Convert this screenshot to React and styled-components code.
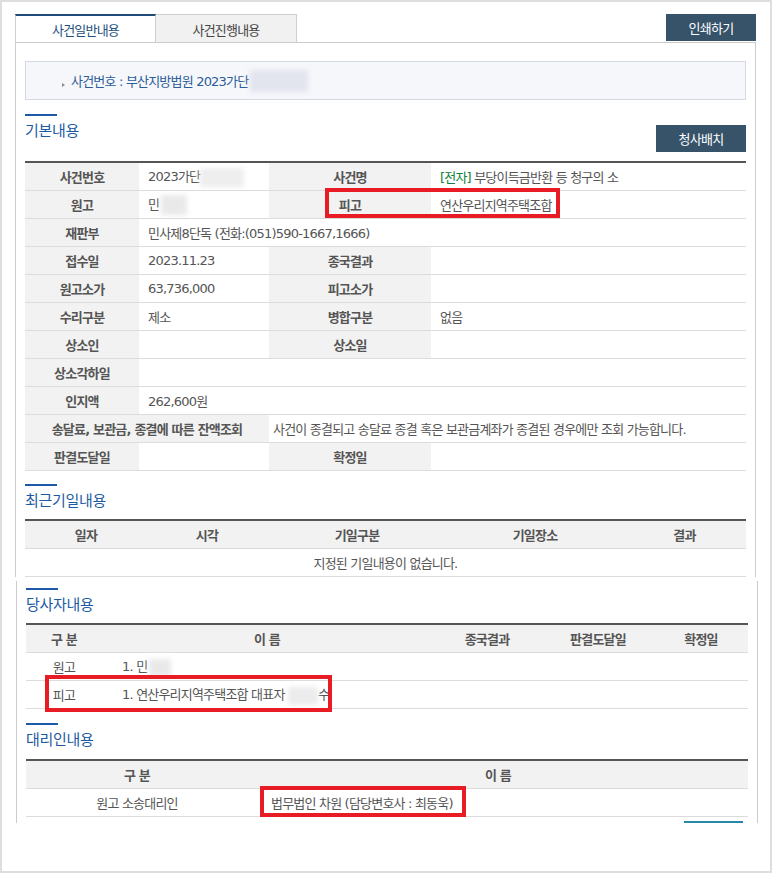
import React from 'react';
import styled, { createGlobalStyle } from 'styled-components';

const GlobalStyle = createGlobalStyle`
  html, body { margin: 0; padding: 0; background: #fff; }
  * { box-sizing: border-box; }
  body {
    font-family: "DejaVu Sans", "Noto Sans CJK KR", sans-serif;
    font-size: 13px;
    letter-spacing: -0.8px;
    color: #555;
  }
`;

const Frame = styled.div`
  width: 772px;
  height: 873px;
  border: 2px solid #dedede;
  padding: 12px 14px 0 13px;
  background: #fff;
`;

const TopBar = styled.div`
  display: flex;
  justify-content: space-between;
  align-items: flex-start;
  height: 28px;
`;

const Tabs = styled.div`
  display: flex;
`;

const Tab = styled.div`
  width: 141px;
  height: 28px;
  display: flex;
  align-items: center;
  justify-content: center;
  border-top: ${p => (p.$active ? '2px solid #1e4b78' : '1px solid #cfcfcf')};
  border-left: ${p => (p.$active ? '1px solid #cfcfcf' : 'none')};
  border-right: 1px solid #cfcfcf;
  background: ${p => (p.$active ? '#fff' : '#f1f1f1')};
  color: ${p => (p.$active ? '#24507e' : '#444')};
  font-size: 13px;
  padding-top: ${p => (p.$active ? '0' : '1px')};
`;

const DarkButton = styled.button`
  width: 90px;
  height: 27px;
  margin-top: ${p => p.$mt || 0}px;
  padding: 0;
  border: none;
  background: #36536a;
  color: #fff;
  font: inherit;
  font-size: 13px;
  letter-spacing: -0.7px;
  display: flex;
  align-items: center;
  justify-content: center;
  flex-shrink: 0;
`;

const Panel = styled.div`
  width: ${p => p.$w}px;
  margin-left: ${p => p.$ml || 0}px;
  margin-top: ${p => p.$mt || 0}px;
  border-left: 1px solid #cccccc;
  border-right: 1px solid #cccccc;
  border-top: ${p => (p.$top ? '1px solid #cccccc' : 'none')};
  padding: ${p => p.$pt || 0}px 9px 0 9px;
`;

const CaseBox = styled.div`
  margin-top: 18px;
  height: 39px;
  border: 1px solid #d5d9e3;
  background: #f6f7fb;
  display: flex;
  align-items: center;
  padding-left: 36px;
  color: #2b5d98;
  font-size: 13px;
`;

const Bullet = styled.span`
  width: 0;
  height: 0;
  border-left: 3px solid #8a8a8a;
  border-top: 2.5px solid transparent;
  border-bottom: 2.5px solid transparent;
  margin: 8px 6px 0 0;
`;

const Blur = styled.span`
  display: inline-block;
  width: ${p => p.$w}px;
  height: ${p => p.$h}px;
  background: ${p => p.$bg || '#ececec'};
  filter: blur(2.5px);
  vertical-align: middle;
  margin-left: ${p => p.$ml || 0}px;
`;

const SectionHead = styled.div`
  display: flex;
  justify-content: space-between;
  align-items: flex-start;
  margin-top: ${p => p.$mt}px;
`;

const TitleBlock = styled.div`
  display: flex;
  flex-direction: column;
`;

const Bar = styled.div`
  width: 32px;
  height: 2px;
  background: #1c5aa8;
`;

const Title = styled.h3`
  margin: 5px 0 0;
  font-size: 15px;
  line-height: 20px;
  font-weight: normal;
  color: #1c5aa3;
  letter-spacing: -0.3px;
`;

const TableWrap = styled.div`
  position: relative;
  margin-top: ${p => p.$mt}px;
`;

const Table = styled.table`
  width: 100%;
  border-collapse: separate;
  border-spacing: 0;
  table-layout: fixed;
  border-top: 2px solid #555;
`;

const Th = styled.th`
  height: 28px;
  padding: 0;
  background: #f2f2f2;
  border-bottom: 1px solid #dcdcdc;
  font-weight: bold;
  color: #555;
  text-align: center;
  font-size: 13px;
  white-space: nowrap;
`;

const Td = styled.td`
  height: 28px;
  padding: 0 0 0 ${p => (p.$pl ?? 9)}px;
  border-bottom: 1px solid #dcdcdc;
  text-align: ${p => p.$align || 'left'};
  color: #555;
  background: #fff;
  white-space: nowrap;
  font-size: 13px;
`;

const Tag = styled.span`
  color: #0f8240;
`;

const Highlight = styled.div`
  position: absolute;
  left: ${p => p.$x}px;
  top: ${p => p.$y}px;
  width: ${p => p.$w}px;
  height: ${p => p.$h}px;
  border: 4px solid #e81c24;
  pointer-events: none;
`;

const Footer = styled.div`
  display: flex;
  justify-content: flex-end;
  padding: 4px 5px 0 0;
`;

const TealBar = styled.div`
  width: 59px;
  height: 2px;
  background: #2a89ab;
`;

const Cols = ({ widths }) => (
  <colgroup>
    {widths.map((w, i) => (
      <col key={i} style={{ width: w }} />
    ))}
  </colgroup>
);

export default function App() {
  return (
    <>
      <GlobalStyle />
      <Frame>
        <TopBar>
          <Tabs>
            <Tab $active>사건일반내용</Tab>
            <Tab>사건진행내용</Tab>
          </Tabs>
          <DarkButton>인쇄하기</DarkButton>
        </TopBar>

        <Panel $w={741} $top>
          <CaseBox>
            <Bullet />
            사건번호 : 부산지방법원 2023가단
            <Blur $w={58} $h={22} $bg="#e2e4ee" $ml={2} />
          </CaseBox>

          <SectionHead $mt={14}>
            <TitleBlock>
              <Bar />
              <Title>기본내용</Title>
            </TitleBlock>
            <DarkButton $mt={11}>청사배치</DarkButton>
          </SectionHead>

          <TableWrap $mt={9}>
            <Table>
              <Cols widths={[114, 130, 162, 315]} />
              <tbody>
                <tr>
                  <Th>사건번호</Th>
                  <Td>2023가단<Blur $w={44} $h={19} $bg="#eeeeee" /></Td>
                  <Th>사건명</Th>
                  <Td><Tag>[전자]</Tag> 부당이득금반환 등 청구의 소</Td>
                </tr>
                <tr>
                  <Th>원고</Th>
                  <Td>민<Blur $w={26} $h={20} $bg="#e9e9e9" $ml={2} /></Td>
                  <Th>피고</Th>
                  <Td>연산우리지역주택조합</Td>
                </tr>
                <tr>
                  <Th>재판부</Th>
                  <Td colSpan={3}>민사제8단독 (전화:(051)590-1667,1666)</Td>
                </tr>
                <tr>
                  <Th>접수일</Th>
                  <Td>2023.11.23</Td>
                  <Th>종국결과</Th>
                  <Td />
                </tr>
                <tr>
                  <Th>원고소가</Th>
                  <Td>63,736,000</Td>
                  <Th>피고소가</Th>
                  <Td />
                </tr>
                <tr>
                  <Th>수리구분</Th>
                  <Td>제소</Td>
                  <Th>병합구분</Th>
                  <Td>없음</Td>
                </tr>
                <tr>
                  <Th>상소인</Th>
                  <Td />
                  <Th>상소일</Th>
                  <Td />
                </tr>
                <tr>
                  <Th>상소각하일</Th>
                  <Td colSpan={3} />
                </tr>
                <tr>
                  <Th>인지액</Th>
                  <Td colSpan={3}>262,600원</Td>
                </tr>
                <tr>
                  <Th colSpan={2}>송달료, 보관금, 종결에 따른 잔액조회</Th>
                  <Td colSpan={2} $pl={4}>
                    사건이 종결되고 송달료 종결 혹은 보관금계좌가 종결된 경우에만 조회 가능합니다.
                  </Td>
                </tr>
                <tr>
                  <Th>판결도달일</Th>
                  <Td />
                  <Th>확정일</Th>
                  <Td />
                </tr>
              </tbody>
            </Table>
            <Highlight $x={300} $y={27} $w={235} $h={30} />
          </TableWrap>

          <SectionHead $mt={13}>
            <TitleBlock>
              <Bar />
              <Title>최근기일내용</Title>
            </TitleBlock>
          </SectionHead>

          <TableWrap $mt={8}>
            <Table>
              <Cols widths={[122, 120, 180, 176, 123]} />
              <thead>
                <tr>
                  <Th>일자</Th>
                  <Th>시각</Th>
                  <Th>기일구분</Th>
                  <Th>기일장소</Th>
                  <Th>결과</Th>
                </tr>
              </thead>
              <tbody>
                <tr>
                  <Td colSpan={5} $align="center" $pl={0}>지정된 기일내용이 없습니다.</Td>
                </tr>
              </tbody>
            </Table>
          </TableWrap>
        </Panel>

        <Panel $w={742} $ml={1} $mt={4} $pt={7}>
          <SectionHead $mt={0}>
            <TitleBlock>
              <Bar />
              <Title>당사자내용</Title>
            </TitleBlock>
          </SectionHead>

          <TableWrap $mt={8}>
            <Table>
              <Cols widths={[76, 330, 110, 112, 94]} />
              <thead>
                <tr>
                  <Th>구 분</Th>
                  <Th>이 름</Th>
                  <Th>종국결과</Th>
                  <Th>판결도달일</Th>
                  <Th>확정일</Th>
                </tr>
              </thead>
              <tbody>
                <tr>
                  <Td $align="center" $pl={0}>원고</Td>
                  <Td $pl={20}>1. 민<Blur $w={22} $h={18} $bg="#e9e9e9" $ml={2} /></Td>
                  <Td />
                  <Td />
                  <Td />
                </tr>
                <tr>
                  <Td $align="center" $pl={0}>피고</Td>
                  <Td $pl={20}>
                    1. 연산우리지역주택조합 대표자 <Blur $w={30} $h={18} $bg="#ececec" />수
                  </Td>
                  <Td />
                  <Td />
                  <Td />
                </tr>
              </tbody>
            </Table>
            <Highlight $x={19} $y={52} $w={287} $h={37} />
          </TableWrap>

          <SectionHead $mt={14}>
            <TitleBlock>
              <Bar />
              <Title>대리인내용</Title>
            </TitleBlock>
          </SectionHead>

          <TableWrap $mt={9}>
            <Table>
              <Cols widths={[222, 500]} />
              <thead>
                <tr>
                  <Th>구 분</Th>
                  <Th>이 름</Th>
                </tr>
              </thead>
              <tbody>
                <tr>
                  <Td $align="center" $pl={0}>원고 소송대리인</Td>
                  <Td $pl={23}>법무법인 차원 (담당변호사 : 최동욱)</Td>
                </tr>
              </tbody>
            </Table>
            <Highlight $x={234} $y={27} $w={206} $h={31} />
          </TableWrap>

          <Footer>
            <TealBar />
          </Footer>
        </Panel>
      </Frame>
    </>
  );
}
